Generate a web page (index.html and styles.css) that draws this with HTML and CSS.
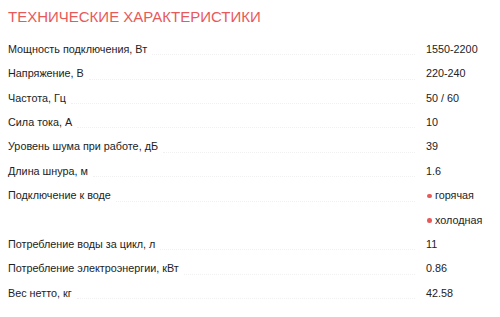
FILE: index.html
```html
<!DOCTYPE html>
<html lang="ru">
<head>
<meta charset="utf-8">
<link rel="stylesheet" href="styles.css">
</head>
<body>
<section class="specs">
  <h2 class="specs-title">Технические характеристики</h2>
  <dl class="spec-list">
    <div class="spec-row"><dt><span class="lbl">Мощность подключения, Вт</span><span class="fill"></span></dt><dd>1550-2200</dd></div>
    <div class="spec-row"><dt><span class="lbl">Напряжение, В</span><span class="fill"></span></dt><dd>220-240</dd></div>
    <div class="spec-row"><dt><span class="lbl">Частота, Гц</span><span class="fill"></span></dt><dd>50 / 60</dd></div>
    <div class="spec-row"><dt><span class="lbl">Сила тока, А</span><span class="fill"></span></dt><dd>10</dd></div>
    <div class="spec-row"><dt><span class="lbl">Уровень шума при работе, дБ</span><span class="fill"></span></dt><dd>39</dd></div>
    <div class="spec-row"><dt><span class="lbl">Длина шнура, м</span><span class="fill"></span></dt><dd>1.6</dd></div>
    <div class="spec-row"><dt><span class="lbl">Подключение к воде</span><span class="fill"></span></dt><dd><ul class="bullets"><li>горячая</li><li>холодная</li></ul></dd></div>
    <div class="spec-row"><dt><span class="lbl">Потребление воды за цикл, л</span><span class="fill"></span></dt><dd>11</dd></div>
    <div class="spec-row"><dt><span class="lbl">Потребление электроэнергии, кВт</span><span class="fill"></span></dt><dd>0.86</dd></div>
    <div class="spec-row"><dt><span class="lbl">Вес нетто, кг</span><span class="fill"></span></dt><dd>42.58</dd></div>
  </dl>
</section>
</body>
</html>
```
FILE: styles.css
```css
html, body {
  margin: 0;
  padding: 0;
  background: #fff;
}
body {
  font-family: "Liberation Sans", Arial, sans-serif;
  color: #222;
  padding: 8px 8px 0 8px;
}
.specs-title {
  margin: 0;
  font-size: 15px;
  font-weight: normal;
  text-transform: uppercase;
  color: #e8595a;
  line-height: 18px;
}
.spec-list {
  margin: 10.8px 0 0 0;
  padding: 0;
}
.spec-row {
  display: grid;
  grid-template-columns: 1fr 66px;
  column-gap: 11px;
  font-size: 10.8px;
  line-height: 24.4px;
}
.spec-row dt {
  display: flex;
  margin: 0;
  height: 24.4px;
}
.spec-row dd {
  margin: 0;
}
.fill {
  flex: 1;
  margin-left: 5px;
  margin-bottom: 6px;
  border-bottom: 1px dotted #f0f0f0;
}
.bullets {
  list-style: none;
  margin: 0;
  padding: 0;
}
.bullets li {
  position: relative;
  padding-left: 9px;
}
.bullets li::before {
  content: "";
  position: absolute;
  left: 1px;
  top: 10.5px;
  width: 4.5px;
  height: 4.5px;
  border-radius: 50%;
  background: #e8595a;
}
```
